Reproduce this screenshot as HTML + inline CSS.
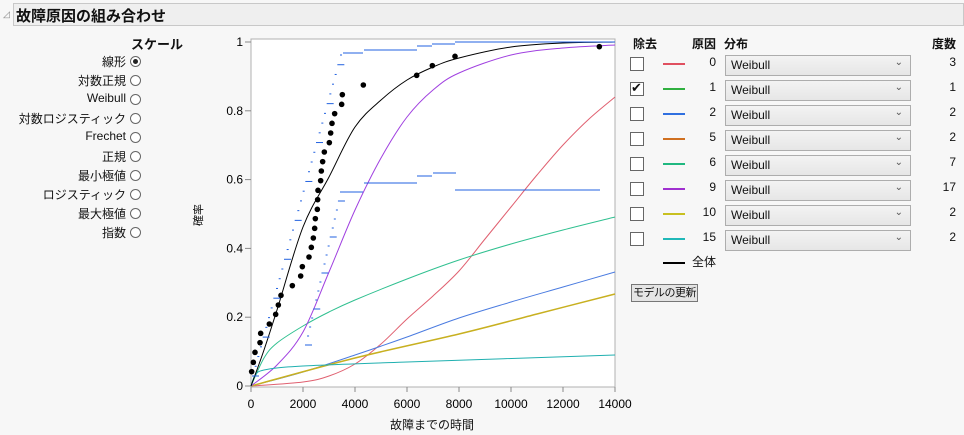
<!DOCTYPE html>
<html><head><meta charset="utf-8"><style>
body{margin:0;width:964px;height:435px;background:#f7f7f7;font-family:"Liberation Sans","Noto Sans CJK JP",sans-serif;font-size:12px;color:#111;position:relative;overflow:hidden}
.a{position:absolute;white-space:nowrap}
.hdr{left:13px;top:3px;width:951px;height:23px;background:#efefef;border:1px solid #c8c8c8;box-sizing:border-box}
.r{width:11px;height:11px;border:1px solid #666;border-radius:50%;box-sizing:border-box;background:#fff}
.cb{width:14px;height:14px;border:1px solid #666;background:#fff;box-sizing:border-box}
.dd{width:186px;height:21px;border:1px solid #adadad;box-sizing:border-box;background:linear-gradient(#f3f3f3,#e6e6e6);font-size:12px;line-height:19px;padding-left:5px}
.dd:after{content:"⌄";position:absolute;right:7px;top:-3px;font-size:10px;color:#555}
.ln{width:22px;height:2px}
</style></head><body>
<div class="a hdr"></div>
<div class="a" style="left:3px;top:9px;font-size:9px;color:#888">◿</div>
<div class="a" style="left:16px;top:5px;font-size:15px;font-weight:bold">故障原因の組み合わせ</div>
<div class="a" style="left:131px;top:34px;font-weight:bold;font-size:13px">スケール</div>
<div id="left"></div>
<div class="a" style="left:187px;top:207px;font-size:11px;transform:rotate(-90deg)">確率</div>
<div class="a" style="left:390px;top:416px;font-size:12px">故障までの時間</div>
<svg class="a" style="left:0;top:0" width="964" height="435" id="svg">
<rect x="251" y="39" width="364" height="348" fill="#fff" stroke="#b0b0b0"/>
</svg>
<div class="a" style="left:633px;top:35px;font-weight:bold">除去</div>
<div class="a" style="left:692px;top:35px;font-weight:bold">原因</div>
<div class="a" style="left:724px;top:35px;font-weight:bold">分布</div>
<div class="a" style="left:932px;top:35px;font-weight:bold">度数</div>
<div id="right"></div>
<div class="a ln" style="left:663px;top:262px;background:#000"></div>
<div class="a" style="left:692px;top:253px">全体</div>
<div class="a" style="left:631px;top:284px;width:67px;height:18px;border:1px solid #777;background:#e4e4e4;box-sizing:border-box;font-size:11px;line-height:16px;text-align:center;letter-spacing:-0.5px">モデルの更新</div>
<script>
var L=["線形","対数正規","Weibull","対数ロジスティック","Frechet","正規","最小極値","ロジスティック","最大極値","指数"],h="";
L.forEach(function(t,i){var y=61+i*19;h+='<div class="a" style="right:838px;top:'+(y-8)+'px">'+t+'</div><div class="a r" style="left:130px;top:'+(y-5)+'px"></div>'});
h+='<div class="a" style="left:133px;top:59px;width:5px;height:5px;border-radius:50%;background:#222"></div>';
document.getElementById('left').innerHTML=h;
var C=[["0","#e05060","3"],["1","#30b040","1"],["2","#3070e0","2"],["5","#d07020","2"],["6","#20b880","7"],["9","#a030d0","17"],["10","#c8c020","2"],["15","#20b8b8","2"]];h="";
C.forEach(function(c,i){var y=64+i*25;h+='<div class="a cb" style="left:630px;top:'+(y-7)+'px">'+(i==1?'<span style="position:absolute;left:0;top:-3px;font-size:13px">✔</span>':'')+'</div><div class="a ln" style="left:663px;top:'+(y-1)+'px;background:'+c[1]+'"></div><div class="a" style="right:248px;top:'+(y-9)+'px">'+c[0]+'</div><div class="a dd" style="left:725px;top:'+(y-9)+'px">Weibull</div><div class="a" style="right:8px;top:'+(y-9)+'px">'+c[2]+'</div>'});
document.getElementById('right').innerHTML=h;
var s="",X=function(v){return 251+v*0.026},Y=function(p){return 386-p*344};
[[1,"1"],[.8,"0.8"],[.6,"0.6"],[.4,"0.4"],[.2,"0.2"],[0,"0"]].forEach(function(t){var y=Y(t[0]);s+='<line x1="245" x2="251" y1="'+y+'" y2="'+y+'" stroke="#888"/><text x="243" y="'+(y+4)+'" text-anchor="end" font-size="12">'+t[1]+'</text>'});
for(var v=0;v<=14000;v+=2000){var x=X(v);s+='<line x1="'+x+'" x2="'+x+'" y1="387" y2="392" stroke="#888"/><text x="'+x+'" y="408" text-anchor="middle" font-size="12">'+v+'</text>'}
function cr(pts){var P=pts.map(function(p){return [X(p[0]),p[1]]});var d="M"+P[0][0]+","+P[0][1];for(var i=0;i<P.length-1;i++){var p0=P[i-1]||P[i],p1=P[i],p2=P[i+1],p3=P[i+2]||p2;d+="C"+(p1[0]+(p2[0]-p0[0])/6).toFixed(1)+","+(p1[1]+(p2[1]-p0[1])/6).toFixed(1)+" "+(p2[0]-(p3[0]-p1[0])/6).toFixed(1)+","+(p2[1]-(p3[1]-p1[1])/6).toFixed(1)+" "+p2[0].toFixed(1)+","+p2[1]}return d}
function pl(pts,c,w){s+='<path d="'+cr(pts)+'" stroke="'+c+'" stroke-width="'+(w||1)+'" fill="none"/>'}
pl([[0,386],[2000,382],[3000,376],[4000,364],[5000,344],[6000,319],[7000,296],[8000,271],[9000,239],[10000,207],[11000,175],[12000,145],[13000,119],[14000,97]],"#e06070");
pl([[0,386],[2000,372],[4000,355],[6000,337],[8000,318],[10000,302],[12000,287],[14000,272]],"#4a7be0");
pl([[0,386],[4000,358],[8000,334],[11000,314],[14000,294]],"#c8b020",1.5);
pl([[0,386],[500,358],[1000,343],[2000,326],[3000,312],[4000,300],[6000,279],[8000,260],[10000,244],[12000,230],[14000,217]],"#30c090");
pl([[0,386],[1000,365],[2000,332],[3000,272],[4000,210],[5000,158],[6000,117],[7000,90],[8000,73],[10000,55],[12000,48],[14000,45]],"#a040e0");
pl([[0,386],[150,376],[500,370],[2000,366],[6000,362],[14000,355]],"#20b0b0");
pl([[0,386],[500,350],[1000,310],[2000,227],[3000,177],[4000,127],[5000,100],[6000,80],[7000,67],[8000,58],[10000,47],[12000,43],[14000,42]],"#000");
var D=[[35,1025],[40,997],[45,967],[60,938],[62,910],[88,882],[107,853],[115,825],[123,796],[157,767],[182,738],[187,710],[207,681],[214,652],[220,624],[224,595],[226,566],[232,538],[233,509],[234,481],[242,452],[244,423],[248,395],[253,366],[268,338],[272,309],[276,280],[284,251],[305,223],[307,194],[370,165],[530,136],[577,107],[645,79],[1078,50]];
D.forEach(function(d){s+='<circle cx="'+(d[0]/3+240)+'" cy="'+(d[1]/3+30)+'" r="2.8"/>'});
function st(x0,y0,x1,y1,n){var r="";for(var i=0;i<n;i++){var f=i/(n-1),x=x0+(x1-x0)*f,y=y0+(y1-y0)*f,ww=(i%4==0)?7:2;r+='<line x1="'+x+'" x2="'+(x+ww)+'" y1="'+y+'" y2="'+y+'" stroke="#2060e0"/>'}return r}
s+=st(252,376,340,55,34)+st(305,345,340,192,18);
[[343,363,53],[364,417,50],[417,432,46],[432,455,44],[455,615,42],[342,363,192],[364,417,183],[417,432,176],[433,456,173],[455,600,190]].forEach(function(l){s+='<line x1="'+l[0]+'" x2="'+l[1]+'" y1="'+l[2]+'" y2="'+l[2]+'" stroke="#2060e0"/>'});
document.getElementById('svg').insertAdjacentHTML('beforeend',s);
</script>
</body></html>
